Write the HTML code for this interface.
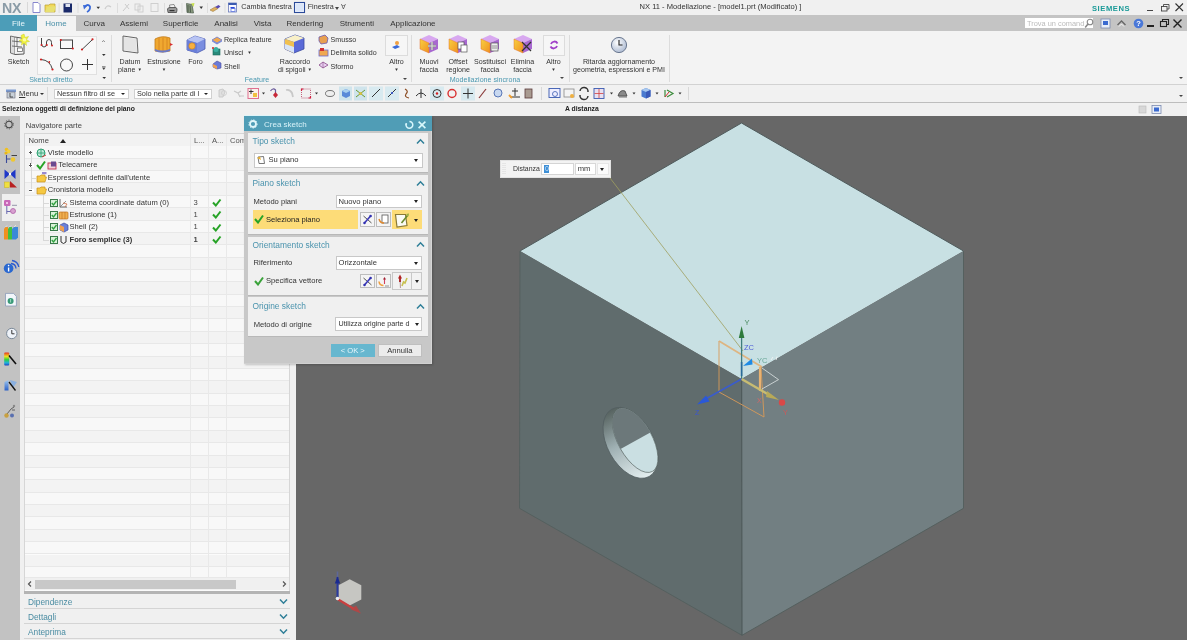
<!DOCTYPE html>
<html><head><meta charset="utf-8">
<style>
*{margin:0;padding:0;box-sizing:border-box}
html,body{width:1187px;height:640px;overflow:hidden;background:#f0f0f0;font-family:"Liberation Sans",sans-serif;color:#333}
.a{position:absolute;white-space:nowrap}
.t{font-size:7.6px;line-height:10px}
.teal{color:#3a8ea8}
.sep{position:absolute;width:1px;background:#d4d4d4}
.dd{position:absolute;background:#fff;border:1px solid #c8c8c8}
svg path:not([fill]),svg polyline:not([fill]){fill:none}
.arr{position:absolute;width:0;height:0;border-left:2.5px solid transparent;border-right:2.5px solid transparent;border-top:3px solid #222}
#wrap{position:absolute;left:0;top:0;width:1187px;height:640px;will-change:transform}
</style></head><body><div id="wrap">

<!-- TITLE BAR -->
<div class="a" style="left:0;top:0;width:1187px;height:15px;background:#f0f0f0"></div>
<div class="a" style="left:2px;top:-0.5px;font-size:14.2px;line-height:16px;font-weight:bold;color:#8a9ba6;letter-spacing:-0.2px">NX</div>
<div class="sep" style="left:26.5px;top:2px;height:11px;background:#d8d8d8"></div>
<svg class="a" style="left:29px;top:1px" width="120" height="13" viewBox="0 0 120 13">
 <path d="M4 1.5 L9 1.5 L11 3.5 L11 11.5 L4 11.5 Z" fill="#fff" stroke="#7a7ac8" stroke-width="0.9"/>
 <path d="M16 4 L20 4 L21 3 L26 3 L26 11 L16 11 Z" fill="#f2d85a" stroke="#b8a030" stroke-width="0.7"/>
 <path d="M18 6 L27 5 L25 11 L16 11 Z" fill="#e8e070"/>
 <rect x="34.5" y="2.5" width="8.5" height="9" fill="#1a2a6a"/><rect x="36.5" y="3" width="4.5" height="3" fill="#dfe4f0"/>
 <path d="M30.1 2 L30.1 12" stroke="#dcdcdc" stroke-width="1"/>
 <path d="M49 2 L49 12" stroke="#dcdcdc" stroke-width="1"/>
 <path d="M56 5.5 Q59 2.5 61 5.5 Q61.5 9 58 11" fill="none" stroke="#3a6ad8" stroke-width="1.8"/><polygon points="54,4 58.5,4.5 55,8.5" fill="#3a6ad8"/>
 <polygon points="67.5,5.8 71,5.8 69.2,8" fill="#333"/>
 <path d="M76 8 Q78 3 82 6" fill="none" stroke="#ccc" stroke-width="1.3"/>
 <path d="M88.5 2 L88.5 12" stroke="#ddd" stroke-width="1"/>
 <path d="M94 10 L100 3 M96 3 L100 8" stroke="#ccc" stroke-width="1"/>
 <rect x="106" y="3" width="5" height="6" fill="none" stroke="#ccc" stroke-width="0.9"/><rect x="109" y="5" width="5" height="6" fill="none" stroke="#ccc" stroke-width="0.9"/>
</svg>
<svg class="a" style="left:149px;top:1px" width="200" height="13" viewBox="0 0 200 13">
 <rect x="2" y="2.5" width="7" height="8" fill="none" stroke="#ccc" stroke-width="0.9"/>
 <path d="M15.5 2 L15.5 12" stroke="#ddd"/>
 <path d="M20.5 4 L25 3.5 L26.5 7 L21 7.5 Z" fill="#f4f4f4" stroke="#666" stroke-width="0.7"/><path d="M18.5 8 Q19 6.5 21 6.5 L26.5 6.5 Q28.5 7 28 9 L27.5 11.5 L19 11.5 Z" fill="#9a9a9a" stroke="#444" stroke-width="0.8"/><rect x="20.5" y="9" width="5" height="1.2" fill="#333"/>
 <path d="M33 2 L33 12" stroke="#ddd"/>
 <path d="M37.5 2.5 L43 3.5 L44.5 12 L38 11.5 Z" fill="#8a9a80" stroke="#4a5a4a" stroke-width="0.7"/><path d="M39 4 L39 11 M41 4.5 L41.5 11.5" stroke="#3a4a3a" stroke-width="0.8"/><path d="M42 2.5 L45.5 2 L44.5 6 Z" fill="#c8e050"/>
 <polygon points="50.5,5.5 54,5.5 52.2,8" fill="#333"/>
 <path d="M58.5 2 L58.5 12" stroke="#ddd"/>
 <path d="M61 9 L66 6 L69 7.5 L64 10.5 Z" fill="#e0b060" stroke="#a08040" stroke-width="0.6"/><path d="M66 6 L69.5 4 L71.5 5.5 L69 7.5 Z" fill="#5a4ab0"/>
 <path d="M76 2 L76 12" stroke="#ddd"/>
 <rect x="79.5" y="2" width="8" height="9" fill="#f8f8ff" stroke="#6a7ab8" stroke-width="0.8"/><rect x="79.5" y="2" width="8" height="2" fill="#3a5ab0"/><path d="M81 6 L86 6 L84 9 Z" fill="#2a4ad8"/><rect x="82" y="7.5" width="4" height="3" fill="#fff" stroke="#2a4ad8" stroke-width="0.6"/>
</svg>
<div class="a t" style="left:241.3px;top:2px;color:#333;font-size:7.2px">Cambia finestra</div>
<svg class="a" style="left:293px;top:1px" width="13" height="13" viewBox="0 0 13 13"><rect x="1.5" y="1.5" width="10" height="10" fill="#f4f8ff" stroke="#2a4a9a" stroke-width="1.1"/><rect x="2.5" y="2.5" width="8" height="8" fill="#dbe6f8"/></svg>
<div class="a t" style="left:307.7px;top:2px;color:#333;font-size:7.2px">Finestra</div>
<div class="arr" style="left:334.5px;top:6.5px;border-top-color:#444"></div>
<div class="a" style="left:341px;top:2px;font-size:7px;line-height:10px;color:#555">&#8704;</div>
<div class="a t" style="left:639.6px;top:2px;color:#333;font-size:7.55px">NX 11 - Modellazione - [model1.prt (Modificato) ]</div>
<div class="a" style="left:1092px;top:3.8px;font-size:7.6px;line-height:10px;font-weight:bold;color:#1a9a98;letter-spacing:0.55px">SIEMENS</div>
<div class="a" style="left:1146.5px;top:10px;width:6px;height:1.2px;background:#444"></div>
<svg class="a" style="left:1159.5px;top:2.5px" width="11" height="10" viewBox="0 0 11 10"><rect x="1.5" y="3.5" width="5.5" height="4.5" fill="none" stroke="#444" stroke-width="0.9"/><path d="M3.5 3.5 L3.5 1.5 L9 1.5 L9 6 L7 6" fill="none" stroke="#444" stroke-width="0.9"/></svg>
<svg class="a" style="left:1173.5px;top:2px" width="11" height="11" viewBox="0 0 11 11"><path d="M1.5 1.5 L9 9 M9 1.5 L1.5 9" stroke="#333" stroke-width="1.1"/></svg>

<!-- TAB BAR -->
<div class="a" style="left:0;top:15px;width:1187px;height:16.6px;background:#c4c4c4"></div>
<div class="a" style="left:0;top:15px;width:37px;height:16.6px;background:#4c9db8"></div>
<div class="a" style="left:37px;top:15.8px;width:38.5px;height:17px;background:#f3f3f3"></div>
<div class="a t" style="left:0;top:18.5px;width:37px;text-align:center;color:#e8f6fa;font-size:8px">File</div>
<div class="a t" style="left:37px;top:18.5px;width:38px;text-align:center;color:#4a90a8;font-size:8px">Home</div>
<div class="a t" style="left:83.6px;top:18.5px;color:#333;font-size:8px">Curva</div>
<div class="a t" style="left:120px;top:18.5px;color:#333;font-size:8px">Assiemi</div>
<div class="a t" style="left:162.8px;top:18.5px;color:#333;font-size:8px">Superficie</div>
<div class="a t" style="left:214.3px;top:18.5px;color:#333;font-size:8px">Analisi</div>
<div class="a t" style="left:253.7px;top:18.5px;color:#333;font-size:8px">Vista</div>
<div class="a t" style="left:286.4px;top:18.5px;color:#333;font-size:8px">Rendering</div>
<div class="a t" style="left:339.7px;top:18.5px;color:#333;font-size:8px">Strumenti</div>
<div class="a t" style="left:390.2px;top:18.5px;color:#333;font-size:8px">Applicazione</div>
<div class="a" style="left:1025.3px;top:18.3px;width:68px;height:10px;background:#fff"></div>
<div class="a t" style="left:1027px;top:18.5px;color:#bbb;font-size:7.4px">Trova un comand</div>
<svg class="a" style="left:1084px;top:18px" width="10" height="11" viewBox="0 0 10 11"><circle cx="6" cy="4" r="2.8" fill="none" stroke="#888" stroke-width="1.1"/><path d="M4 6 L1.2 9.5" stroke="#888" stroke-width="1.5"/></svg>
<svg class="a" style="left:1100px;top:18px" width="11" height="11" viewBox="0 0 11 11"><rect x="1" y="1" width="9" height="9" fill="#e8eef8" stroke="#7a8ab0" stroke-width="0.8"/><rect x="3" y="3" width="5" height="4" fill="#3a6ad0"/></svg>
<svg class="a" style="left:1116px;top:18px" width="11" height="10" viewBox="0 0 11 10"><path d="M1.5 7 L5.5 3 L9.5 7" fill="none" stroke="#666" stroke-width="1.4"/><path d="M3 8.5 L5.5 6 L8 8.5" fill="none" stroke="#fff" stroke-width="0.8"/></svg>
<svg class="a" style="left:1132.5px;top:17.5px" width="11" height="11" viewBox="0 0 11 11"><circle cx="5.5" cy="5.5" r="4.8" fill="#4a78d8"/><text x="5.5" y="8.3" font-size="7.5" font-weight="bold" fill="#fff" text-anchor="middle" font-family="Liberation Sans">?</text></svg>
<div class="a" style="left:1146.5px;top:25px;width:7px;height:1.5px;background:#222"></div>
<svg class="a" style="left:1159px;top:17.5px" width="11" height="10" viewBox="0 0 11 10"><rect x="1.5" y="3.5" width="6" height="5" fill="none" stroke="#222" stroke-width="1.1"/><path d="M3.5 3.5 L3.5 1.5 L9.5 1.5 L9.5 6.5 L7.5 6.5" fill="none" stroke="#222" stroke-width="1.1"/></svg>
<svg class="a" style="left:1172px;top:17.5px" width="11" height="11" viewBox="0 0 11 11"><path d="M1.5 1.5 L9.5 9.5 M9.5 1.5 L1.5 9.5" stroke="#222" stroke-width="1.4"/></svg>

<!-- RIBBON -->
<div class="a" style="left:0;top:31px;width:1187px;height:53px;background:#f3f3f3"></div>
<div class="a" style="left:0;top:84px;width:1187px;height:1px;background:#d2d2d2"></div>
<style>.r{font-size:7.1px;line-height:8px;color:#333;text-align:center}</style>
<!-- Sketch -->
<svg class="a" style="left:8px;top:33px" width="22" height="22" viewBox="0 0 22 22"><path d="M2.5 3 L7 4 L7 21.5 L2.5 20 Z" fill="#ddd" stroke="#555" stroke-width="0.8"/><path d="M7 4 L16 5.5 L16 21 L7 21.5" fill="#f4f4f4" stroke="#555" stroke-width="1"/><path d="M4 8 L14 9 M4 13 L14 14 M9 5 L9 13" stroke="#555" stroke-width="0.8"/><rect x="9.5" y="15" width="5" height="3.5" fill="#fff" stroke="#555" stroke-width="0.7"/>
<path d="M16 1 L17 4.5 L20.5 3.5 L18.5 6.5 L21.5 8.5 L18 9 L18.5 12.5 L16 10 L13.5 12 L14 8.5 L11 7.5 L14 6 L13 2.5 Z" fill="#f0f040" stroke="#c8d020" stroke-width="0.5"/><circle cx="16.5" cy="6.8" r="1.8" fill="#fbfba0"/></svg>
<div class="a r" style="left:0;top:58.1px;width:37px">Sketch</div>
<div class="a" style="left:36.8px;top:35.8px;width:60.7px;height:39.5px;background:#f8f8f8;border:1px solid #e0e0e0"></div>
<svg class="a" style="left:38px;top:36px" width="60" height="38" viewBox="0 0 60 38">
 <path d="M3.5 2.0 L3.5 8.0 Q3.8 11.0 6.0 11.0 Q8.5 11.0 8.5 8.0 L8.5 6.0 Q8.8 3.5 11.0 3.5 Q13.5 3.5 13.5 6.5 L13.5 9.0" stroke="#444" stroke-width="1"/>
 <circle cx="3.5" cy="9" r="1" fill="#d02020"/><circle cx="8.799999999999997" cy="9" r="1" fill="#d02020"/><circle cx="14" cy="9.5" r="1" fill="#d02020"/>
 <rect x="22.5" y="4" width="12" height="8.5" stroke="#444" stroke-width="1" fill="none"/><circle cx="22.799999999999997" cy="4" r="1.1" fill="#d02020"/><circle cx="34.8" cy="12.5" r="1.1" fill="#d02020"/>
 <path d="M44.0 13.5 L54.5 3.5" stroke="#444" stroke-width="1"/><circle cx="44" cy="13.5" r="1.1" fill="#d02020"/><circle cx="54.5" cy="3.299999999999997" r="1.1" fill="#d02020"/>
 <path d="M3.0 23.5 Q12.0 24.0 14.5 33.5" stroke="#444" stroke-width="1"/><circle cx="3" cy="23.5" r="1.1" fill="#d02020"/><circle cx="11.299999999999997" cy="26" r="0.9" fill="#d02020"/><circle cx="14.5" cy="33.5" r="1.1" fill="#d02020"/>
 <circle cx="28.5" cy="29" r="6" stroke="#444" stroke-width="1" fill="none"/>
 <path d="M49.5 23.0 L49.5 34.0 M44.0 28.5 L55.0 28.5" stroke="#333" stroke-width="1"/>
</svg>
<svg class="a" style="left:100px;top:37px" width="8" height="46" viewBox="0 0 8 46"><path d="M2.3 4.8 L3.5 3.6 L4.7 4.8" stroke="#555" stroke-width="0.8"/><polygon points="2,17 5.6,17 3.8,19" fill="#333"/><path d="M2 29.5 L5.6 29.5" stroke="#555" stroke-width="0.6"/><polygon points="2,30.5 5.6,30.5 3.8,33" fill="#444"/><polygon points="2.4,40 6,40 4.2,42" fill="#333"/></svg>
<div class="a r" style="left:25px;top:76.2px;width:52px;color:#4a98b0">Sketch diretto</div>
<div class="sep" style="left:111px;top:35px;height:47px;background:#dcdcdc"></div>
<!-- Datum plane / Estrusione / Foro -->
<svg class="a" style="left:120px;top:34px" width="21" height="21" viewBox="0 0 21 21"><path d="M3 2 L17 4 L18 19 L3 17 Z" fill="#f2f2f2" stroke="#666" stroke-width="1"/><path d="M4 3 L16 5 L17 18 L4 16 Z" fill="#e4e4e4"/></svg>
<div class="a r" style="left:113px;top:58.1px;width:34px">Datum<br>plane <span style="font-size:4.5px;vertical-align:1px">▼</span></div>
<svg class="a" style="left:152px;top:34px" width="24" height="21" viewBox="0 0 24 21"><path d="M3 5 Q10 1 18 4 L18 17 Q10 19 3 17 Z" fill="#f0a830" stroke="#c07818" stroke-width="0.8"/><path d="M7 4 L7 18 M11 3.5 L11 18.5 M15 4 L15 18" stroke="#d88820" stroke-width="1"/><path d="M3 17 Q10 20 18 17 L18 15 Q10 18 3 15 Z" fill="#6a7ac8"/><polygon points="18,9 21,10.5 18,12" fill="#d83030"/></svg>
<div class="a r" style="left:146px;top:58.1px;width:36px">Estrusione<br><span style="font-size:4.5px;vertical-align:1px">▼</span></div>
<svg class="a" style="left:185px;top:34px" width="22" height="21" viewBox="0 0 22 21"><path d="M2 6 L10 2 L20 5 L20 15 L12 19 L2 16 Z" fill="#7a8ee0" stroke="#4a5ab0" stroke-width="0.8"/><path d="M2 6 L12 9 L20 5 L10 2 Z" fill="#b8c4f4"/><path d="M2 6 L12 9 L12 19 L2 16 Z" fill="#6a7ed8"/><circle cx="7" cy="12" r="3.2" fill="#f8b040" stroke="#c88020" stroke-width="0.6"/></svg>
<div class="a r" style="left:183px;top:58.1px;width:25px">Foro</div>
<!-- Replica feature group -->
<svg class="a" style="left:211px;top:34px" width="12" height="36" viewBox="0 0 12 36">
 <path d="M1 6 L6 3 L11 6 L6 9 Z" fill="#f0a850" stroke="#6a7ad0" stroke-width="0.8"/><path d="M1 6 L6 9 L11 6 L11 7.5 L6 10.5 L1 7.5 Z" fill="#7a8ad8"/>
 <rect x="2" y="15" width="7" height="6" fill="#2a8a7a" stroke="#1a6a5a" stroke-width="0.6"/><circle cx="5" cy="15.5" r="2.5" fill="#3ab0a0"/><circle cx="2" cy="14" r="1" fill="#d02020"/>
 <path d="M2 30 L6 27 L10 29 L10 34 L6 35 L2 33 Z" fill="#6a7ad8" stroke="#4a4a9a" stroke-width="0.6"/><path d="M2 30 L6 32 L6 35 L2 33 Z" fill="#f0a050"/>
</svg>
<div class="a r" style="left:224px;top:35.7px;text-align:left">Replica feature</div>
<div class="a r" style="left:224px;top:49.1px;text-align:left">Unisci &nbsp;<span style="font-size:4.5px;vertical-align:1px">▼</span></div>
<div class="a r" style="left:224px;top:63.2px;text-align:left">Shell</div>
<!-- Raccordo -->
<svg class="a" style="left:283px;top:33px" width="23" height="22" viewBox="0 0 23 22"><path d="M2 6 L12 2 L21 5 L21 16 L11 20 L2 16 Z" fill="#5a6ad8" stroke="#3a4aa0" stroke-width="0.8"/><path d="M2 6 L11 9 L21 5 L12 2 Z" fill="#f8f0c8"/><path d="M2 6 L11 9 L11 20 L2 16 Z" fill="#f0c050"/><path d="M2 11 L11 14 L11 20 L2 16 Z" fill="#d8e4f8"/></svg>
<div class="a r" style="left:276px;top:58.1px;width:38px">Raccordo<br>di spigoli <span style="font-size:4.5px;vertical-align:1px">▼</span></div>
<!-- Smusso group -->
<svg class="a" style="left:317px;top:33px" width="13" height="38" viewBox="0 0 13 38">
 <path d="M2 4 L8 2 L11 5 L10 10 L4 11 L2 8 Z" fill="#e8a050" stroke="#6a5ab0" stroke-width="0.8"/>
 <rect x="2" y="17" width="9" height="6" fill="#f0a850" stroke="#6a6ad0" stroke-width="0.8"/><rect x="3" y="15" width="4" height="3" fill="#d03030"/>
 <path d="M2 32 L6 29 L11 32 L6 35 Z" fill="#e8d0f0" stroke="#8a4a8a" stroke-width="0.8"/><path d="M6 29 L6 35" stroke="#8a4a8a" stroke-width="0.6"/>
</svg>
<div class="a r" style="left:330.6px;top:35.7px;text-align:left">Smusso</div>
<div class="a r" style="left:330.6px;top:49.1px;text-align:left">Delimita solido</div>
<div class="a r" style="left:330.6px;top:63.2px;text-align:left">Sformo</div>
<div class="a" style="left:385px;top:34.5px;width:23px;height:21px;background:#f6f6f6;border:1px solid #dcdcdc"></div>
<svg class="a" style="left:390px;top:39px" width="12" height="12" viewBox="0 0 12 12"><circle cx="7" cy="4" r="2" fill="#f0a040"/><path d="M2 8 L7 6 L10 8 L5 10 Z" fill="#3a6ad8"/></svg>
<div class="a r" style="left:383px;top:58.1px;width:27px">Altro<br><span style="font-size:4.5px;vertical-align:1px">▼</span></div>
<div class="a r" style="left:237px;top:76.2px;width:40px;color:#4a98b0">Feature</div>
<polygon></polygon>
<div class="arr" style="left:402.5px;top:77.5px;border-top-color:#444;border-left-width:2px;border-right-width:2px;border-top-width:2.5px"></div>
<div class="sep" style="left:411px;top:35px;height:47px;background:#dcdcdc"></div>
<!-- Modellazione sincrona -->
<svg class="a" style="left:418px;top:33px" width="120" height="22" viewBox="0 0 120 22">
 <defs><linearGradient id="pc" x1="0" y1="0" x2="0" y2="1"><stop offset="0" stop-color="#d8a0f0"/><stop offset="1" stop-color="#9a50c8"/></linearGradient></defs>
 <linearGradient id="lf" x1="0" y1="0" x2="1" y2="1"><stop offset="0" stop-color="#f8d040"/><stop offset="1" stop-color="#f09020"/></linearGradient><g id="cubeA"><path d="M2 6 L11 2 L20 6 L11 10 Z" fill="#d8a8f0"/><path d="M11 10 L20 6 L20 16 L11 20 Z" fill="#a868d0"/><path d="M2 6 L11 10 L11 20 L2 16 Z" fill="url(#lf)" stroke="#e07030" stroke-width="0.5"/></g>
 <path d="M10 13 L18 13 M14 9 L14 17" stroke="#888" stroke-width="2.6"/><path d="M10 13 L18 13 M14 9 L14 17" stroke="#ddd" stroke-width="1.2"/>
 <use href="#cubeA" x="29"/><rect x="40" y="9" width="6" height="7" fill="#fff" stroke="#555" stroke-width="0.7"/><rect x="43" y="12" width="6" height="7" fill="#fff" stroke="#555" stroke-width="0.7"/>
 <use href="#cubeA" x="61"/><rect x="73" y="10" width="7" height="8" fill="#eee" stroke="#555" stroke-width="0.7"/><path d="M74 13 L79 13 M74 15 L79 15" stroke="#555" stroke-width="0.6"/>
 <use href="#cubeA" x="94"/><path d="M104 9 L113 18 M113 9 L104 18" stroke="#333" stroke-width="1.3"/>
</svg>
<div class="a r" style="left:414px;top:58.1px;width:30px">Muovi<br>faccia</div>
<div class="a r" style="left:442px;top:58.1px;width:32px">Offset<br>regione</div>
<div class="a r" style="left:472px;top:58.1px;width:36px">Sostituisci<br>faccia</div>
<div class="a r" style="left:506px;top:58.1px;width:33px">Elimina<br>faccia</div>
<div class="a" style="left:542.6px;top:35px;width:22.4px;height:20.5px;background:#f6f6f6;border:1px solid #dcdcdc"></div>
<svg class="a" style="left:548px;top:39px" width="12" height="12" viewBox="0 0 12 12"><path d="M3 5 A3.5 3.5 0 0 1 9.5 4.5" fill="none" stroke="#a040c8" stroke-width="1.8"/><path d="M9 7 A3.5 3.5 0 0 1 2.5 7.5" fill="none" stroke="#a040c8" stroke-width="1.8"/></svg>
<div class="a r" style="left:540px;top:58.1px;width:27px">Altro<br><span style="font-size:4.5px;vertical-align:1px">▼</span></div>
<div class="a r" style="left:445px;top:76.2px;width:80px;color:#4a98b0">Modellazione sincrona</div>
<div class="arr" style="left:560px;top:77px;border-top-color:#444;border-left-width:2px;border-right-width:2px;border-top-width:2.5px"></div>
<div class="sep" style="left:568.5px;top:35px;height:47px;background:#dcdcdc"></div>
<!-- Ritarda -->
<svg class="a" style="left:610px;top:35.5px" width="18" height="18" viewBox="0 0 18 18"><defs><radialGradient id="clk" cx="0.4" cy="0.35" r="0.7"><stop offset="0" stop-color="#ffffff"/><stop offset="1" stop-color="#aab8d0"/></radialGradient></defs><circle cx="9" cy="9" r="7.6" fill="url(#clk)" stroke="#6a7890" stroke-width="1"/><path d="M9 4 L9 9 L12.5 9" fill="none" stroke="#222" stroke-width="1.1"/></svg>
<div class="a r" style="left:569px;top:58.1px;width:100px">Ritarda aggiornamento<br>geometria, espressioni e PMI</div>
<div class="sep" style="left:669px;top:35px;height:47px;background:#dcdcdc"></div>
<div class="arr" style="left:1179px;top:77px;border-top-color:#444;border-left-width:2px;border-right-width:2px;border-top-width:2.5px"></div>

<!-- TOOLBAR -->
<div class="a" style="left:0;top:85px;width:1187px;height:17px;background:#f1f1f1"></div>
<div class="a" style="left:0;top:102px;width:1187px;height:1px;background:#bdbdbd"></div>
<svg class="a" style="left:5px;top:88px" width="12" height="11" viewBox="0 0 12 11"><rect x="1" y="1.5" width="10" height="2.5" fill="#7a9ad0"/><rect x="2" y="4" width="8" height="6" fill="#c8d0d8" stroke="#667" stroke-width="0.6"/><path d="M5 5 L5 9 L8 9" fill="none" stroke="#333" stroke-width="0.8"/></svg>
<div class="a" style="left:19px;top:88.5px;font-size:7.6px;line-height:10px;color:#333;text-decoration:underline;text-decoration-thickness:0.6px">M</div><div class="a" style="left:25.5px;top:88.5px;font-size:7.6px;line-height:10px;color:#333">enu</div>
<div class="arr" style="left:40px;top:92.5px;border-top-color:#333;border-left-width:2px;border-right-width:2px;border-top-width:2.5px"></div>
<div class="sep" style="left:46.5px;top:87px;height:14px;background:#dadada"></div>
<div class="dd" style="left:54px;top:89px;width:75px;height:9.5px;border-color:#d0d0d0"></div>
<div class="a" style="left:57px;top:89.2px;font-size:7.3px;line-height:10px;color:#333">Nessun filtro di se</div>
<div class="arr" style="left:120.5px;top:92.5px;border-left-width:2.2px;border-right-width:2.2px;border-top-width:2.8px"></div>
<div class="dd" style="left:134px;top:89px;width:78px;height:9.5px;border-color:#d0d0d0"></div>
<div class="a" style="left:137px;top:89.2px;font-size:7.3px;line-height:10px;color:#333">Solo nella parte di l</div>
<div class="arr" style="left:204px;top:92.5px;border-left-width:2.2px;border-right-width:2.2px;border-top-width:2.8px"></div>
<svg class="a" style="left:214px;top:86px" width="480" height="15" viewBox="0 0 480 15">
 <!-- greyed icons -->
 <path d="M5 4 L9 3 L11 6 L9 11 L5 11 Z" fill="#e0e0e0" stroke="#c4c4c4" stroke-width="0.8"/><circle cx="10" cy="7" r="2.5" fill="none" stroke="#ccc" stroke-width="0.8"/>
 <path d="M20 5 L24 7 L27 5 M24 7 L26 11 M25 10 L30 10" stroke="#c8c8c8" stroke-width="1.1"/>
 <rect x="34" y="2.5" width="10.5" height="10" fill="#fbf0ec" stroke="#e07090" stroke-width="1"/><path d="M37 3.5 L37 8 M35 5.5 L39.5 5.5" stroke="#222" stroke-width="0.9"/><rect x="39" y="7" width="4" height="4" fill="#f0c040"/>
 <polygon points="48,6.5 51,6.5 49.5,8.5" fill="#333"/>
 <path d="M56.5 5 Q59 1.5 61.5 4 L61.5 8" fill="none" stroke="#6a5a9a" stroke-width="1.2"/><polygon points="61.5,6 64,9 61.5,12 59,9" fill="#c82838"/>
 <path d="M72 4 Q76 3 78 7 L79 11" fill="none" stroke="#c8c8c8" stroke-width="1.8"/>
 <rect x="87.5" y="3" width="9" height="9" fill="none" stroke="#b84060" stroke-width="0.8" stroke-dasharray="1 1"/><path d="M87.5 5 L87.5 3 L89.5 3 M94.5 12 L96.5 12 L96.5 10" stroke="#d02040" stroke-width="1.2"/>
 <polygon points="101,6.5 104,6.5 102.5,8.5" fill="#333"/>
 <ellipse cx="116" cy="7.5" rx="4.5" ry="3" fill="#eee" stroke="#555" stroke-width="0.8"/>
 <rect x="125" y="0.5" width="13" height="14" fill="#cfe4ec"/><path d="M128 5 L132 3 L136 5 L136 10 L132 12 L128 10 Z" fill="#5a8ad8"/><path d="M128 5 L132 7 L136 5 L132 3 Z" fill="#a8d0f0"/>
 <rect x="140" y="0.5" width="13" height="14" fill="#cfe4ec"/><path d="M142 4 L151 11 M151 4 L142 11" stroke="#6a9a30" stroke-width="1"/><circle cx="146.5" cy="7.5" r="1.6" fill="#d8c040"/>
 <rect x="155" y="0.5" width="14" height="14" fill="#d8eaf0"/><path d="M158 11 L166 3" stroke="#333" stroke-width="1"/>
 <rect x="171" y="0.5" width="14" height="14" fill="#d8eaf0"/><path d="M174 11 L182 3" stroke="#333" stroke-width="1"/><circle cx="178" cy="7" r="1" fill="#2a4ad0"/>
 <path d="M191 3 Q195 5 192 8 Q190 11 195 12" fill="none" stroke="#8a4a20" stroke-width="1.2"/>
 <path d="M202 10 Q207 4 212 10 M207 3 L207 12" fill="none" stroke="#333" stroke-width="1"/>
 <rect x="216" y="0.5" width="14" height="14" fill="#d8eaf0"/><circle cx="223" cy="7.5" r="4" fill="none" stroke="#333" stroke-width="1"/><circle cx="223" cy="7.5" r="1.2" fill="#d02020"/>
 <circle cx="238" cy="7.5" r="4" fill="none" stroke="#d83030" stroke-width="1.4"/>
 <rect x="247" y="0.5" width="14" height="14" fill="#d8eaf0"/><path d="M254 2.5 L254 12.5 M249 7.5 L259 7.5" stroke="#333" stroke-width="1"/>
 <path d="M265 12 L272 3" stroke="#8a3a3a" stroke-width="1.2"/>
 <circle cx="284" cy="7" r="4" fill="#c8d8f0" stroke="#4a6ab0" stroke-width="0.9"/>
 <path d="M296 11 L306 11 M301 2 L301 10 M298 5 L304 5" stroke="#333" stroke-width="1"/><path d="M295 9 L298 12" stroke="#f0a030" stroke-width="2"/>
 <rect x="311" y="3" width="7" height="9" fill="#a89a90" stroke="#5a3a3a" stroke-width="0.8"/>
 <path d="M327.5 1 L327.5 14" stroke="#d8d8d8"/>
 <rect x="335" y="2.5" width="11" height="9" fill="#eef" stroke="#3a5ab0" stroke-width="0.9"/><circle cx="341" cy="8" r="2.5" fill="none" stroke="#3a5ab0" stroke-width="0.8"/>
 <rect x="350" y="3" width="10" height="8" fill="#f4f4f4" stroke="#888" stroke-width="0.8"/><circle cx="358" cy="10" r="2" fill="#f0b040"/>
 <path d="M366 5 A4 4 0 0 1 374 6 M374 10 A4 4 0 0 1 366 9" fill="none" stroke="#333" stroke-width="1.5"/>
 <rect x="380" y="2.5" width="10" height="10" fill="#e8e0f0" stroke="#3a5ab0" stroke-width="0.9"/><path d="M385 3 L385 12 M380.5 7.5 L389.5 7.5" stroke="#d04040" stroke-width="0.8"/>
 <polygon points="396,6.5 399,6.5 397.5,8.5" fill="#333"/>
 <path d="M404 10 Q406 3 411 5 L413 10 Z" fill="#8a8a8a" stroke="#444" stroke-width="0.8"/><path d="M405 11 L413 11" stroke="#555" stroke-width="0.8"/>
 <polygon points="418.5,6.5 421.5,6.5 420,8.5" fill="#333"/>
 <path d="M427.5 4 L432 2 L436.5 4 L436.5 10.5 L432 12.5 L427.5 10.5 Z" fill="#4a7ad0"/><path d="M427.5 4 L432 6 L436.5 4 L432 2 Z" fill="#a8c8f0"/><path d="M432 6 L432 12.5 L436.5 10.5 L436.5 4 Z" fill="#3a5ab8"/>
 <polygon points="441.5,6.5 444.5,6.5 443,8.5" fill="#333"/>
 <path d="M451 4 L451 11 M453 4 L459 7.5 L453 11" fill="none" stroke="#3a8a3a" stroke-width="1.2"/><path d="M451 11 L455 6" stroke="#d03030" stroke-width="1"/>
 <polygon points="464.5,6.5 467.5,6.5 466,8.5" fill="#333"/>
 <path d="M474.5 1 L474.5 14" stroke="#d8d8d8"/>
</svg>
<div class="arr" style="left:1179px;top:95px;border-top-color:#444;border-left-width:2px;border-right-width:2px;border-top-width:2.5px"></div>

<!-- STATUS -->
<div class="a" style="left:0;top:103px;width:1187px;height:13px;background:#f0f0f0"></div>
<div class="a" style="left:2px;top:104px;font-size:6.8px;line-height:10px;font-weight:bold;color:#222">Seleziona oggetti di definizione del piano</div>
<div class="a" style="left:565px;top:104px;font-size:6.8px;line-height:10px;font-weight:bold;color:#222">A distanza</div>
<svg class="a" style="left:1137px;top:104px" width="28" height="11" viewBox="0 0 28 11"><rect x="2" y="2" width="7" height="7" fill="#d8d8d8" stroke="#bbb" stroke-width="0.6"/><rect x="15" y="1.5" width="9" height="8" fill="#e8eef8" stroke="#7a8ab0" stroke-width="0.8"/><rect x="17" y="3.5" width="5" height="4" fill="#3a6ad0"/></svg>

<!-- SIDEBAR -->
<div class="a" style="left:0;top:116px;width:20px;height:524px;background:#c2c2c2"></div>
<div class="a" style="left:2.2px;top:193.8px;width:17.6px;height:27.5px;background:#efefef"></div>
<svg class="a" style="left:0;top:116px" width="20" height="310" viewBox="0 0 20 310">
 <defs><linearGradient id="rb" x1="0" y1="0" x2="0" y2="1"><stop offset="0" stop-color="#e83020"/><stop offset="0.3" stop-color="#f0e020"/><stop offset="0.55" stop-color="#30d040"/><stop offset="0.8" stop-color="#20b0e0"/><stop offset="1" stop-color="#2040c0"/></linearGradient>
 <linearGradient id="bk" x1="0" y1="0" x2="0" y2="1"><stop offset="0" stop-color="#a0c8f0"/><stop offset="1" stop-color="#2a60c8"/></linearGradient></defs>
 <!-- gear -->
 <circle cx="9" cy="8.5" r="3.2" fill="none" stroke="#444" stroke-width="1.1"/><circle cx="9" cy="8.5" r="4.4" fill="none" stroke="#555" stroke-width="0.9" stroke-dasharray="1.2 1.6"/>
 <!-- icon1 -->
 <circle cx="6.5" cy="33.5" r="1.8" fill="#f0c020"/><circle cx="8.5" cy="35.5" r="2" fill="#f4d040"/><circle cx="6" cy="37" r="1.6" fill="#e8b818"/>
 <path d="M6.5 39 L6.5 47 M6.5 43 L10.5 43" stroke="#3a4a9a" stroke-width="1.1"/>
 <circle cx="13" cy="43.5" r="2.3" fill="#f0c830"/>
 <path d="M11.5 39.5 L17 39.5" stroke="#333" stroke-width="0.9"/>
 <!-- icon2 bowtie -->
 <polygon points="4.5,53.5 10,58 4.5,63" fill="#2038c8"/><polygon points="15.5,53.5 10,58 15.5,63" fill="#2038c8"/><circle cx="10" cy="58" r="1.2" fill="#fff"/>
 <rect x="4.5" y="66" width="4.8" height="5.6" fill="#f0e040" stroke="#c8b020" stroke-width="0.5"/>
 <polygon points="10,65 10,71.6 17,71.6" fill="#b82020"/>
 <!-- icon3 selected -->
 <rect x="4" y="84" width="6.5" height="6" rx="1.2" fill="#c868b8"/><rect x="6" y="86" width="2" height="2" fill="#f0c0e8"/>
 <path d="M12 89.3 L17 89.3" stroke="#8a8aa0" stroke-width="0.9"/>
 <path d="M6.8 90 L6.8 98 M6.8 95.5 L10.5 95.5" stroke="#6a6ab0" stroke-width="1"/>
 <circle cx="13" cy="95" r="2.5" fill="#d8a0d0" stroke="#b060a8" stroke-width="0.8"/>
 <!-- icon4 books -->
 <path d="M4 113 L5.5 111 L8 111 L8 123.5 L4 123.5 Z" fill="#f09020"/>
 <path d="M8 113 L9.5 111 L12 111 L12 123.5 L8 123.5 Z" fill="#40c040"/>
 <path d="M12 113 L14 111 L18 111 L18 121.5 L16 123.5 L12 123.5 Z" fill="#3a88d8"/>
 <path d="M5.5 111 L7 109.5 M9.5 111 L11 109.5 M14 111 L16 109" stroke="#e8e8e8" stroke-width="0.8"/>
 <!-- icon5 info -->
 <path d="M11 147.5 A5.5 5.5 0 0 1 16 152.5 M12 144.5 A8 8 0 0 1 18.8 151" stroke="#2a5ad0" stroke-width="1.3"/>
 <circle cx="8.6" cy="152.4" r="4.8" fill="#2a68d0"/><path d="M8.6 151.5 L8.6 155.5" stroke="#fff" stroke-width="1.4"/><circle cx="8.6" cy="149.6" r="0.8" fill="#fff"/>
 <!-- icon6 doc -->
 <path d="M5.5 177.4 L13.5 177.4 L16.4 180.4 L16.4 190 L5.5 190 Z" fill="#f2f6fa" stroke="#8a9ab8" stroke-width="0.8"/><circle cx="10.6" cy="185" r="3" fill="#3a9a78"/><path d="M10.6 183 L10.6 186.5" stroke="#b8e8d0" stroke-width="0.8"/>
 <!-- icon7 clock -->
 <circle cx="11.8" cy="217.5" r="5.2" fill="#eef2f8" stroke="#7a8898" stroke-width="1"/><path d="M11.8 214 L11.8 217.8 L14.5 217.8" stroke="#222" stroke-width="0.9"/>
 <!-- icon8 rainbow -->
 <rect x="4.2" y="236.5" width="5" height="13" rx="1" fill="url(#rb)"/><path d="M9 239.5 L16 248" stroke="#111" stroke-width="1.6"/>
 <!-- icon9 blue k -->
 <path d="M4.5 266 L8.5 264 L8.5 274.5 L4.5 274.5 Z" fill="url(#bk)"/><path d="M10 264 L17 266 L13 272 Z" fill="#8ab0e0"/><path d="M9 266 L15.5 274.5" stroke="#111" stroke-width="1.3"/>
 <!-- icon10 robot -->
 <path d="M7 298 L11 293 L14 291 M12 294 L15 294" stroke="#555" stroke-width="0.9"/><circle cx="6.5" cy="299.5" r="2.2" fill="#c8a040"/><circle cx="12" cy="299.5" r="2" fill="#5a70b0"/><circle cx="14" cy="290" r="1.2" fill="#888"/>
</svg>

<!-- LEFT PANEL -->
<div class="a" style="left:20px;top:116px;width:276px;height:524px;background:#f0f0f0"></div>
<div class="a t" style="left:25.8px;top:120.5px;color:#444">Navigatore parte</div>
<!-- table -->
<div class="a" style="left:24px;top:133px;width:265.5px;height:459px;background:#fbfbfb;border:1px solid #d6d6d6"></div>
<div class="a" style="left:25px;top:134px;width:264px;height:12.5px;background:#f2f2f2;border-bottom:1px solid #e2e2e2"></div>
<div class="a t" style="left:28.6px;top:136px;color:#444">Nome</div>
<div class="a" style="left:59.5px;top:138.5px;width:0;height:0;border-left:3px solid transparent;border-right:3px solid transparent;border-bottom:4px solid #222"></div>
<div class="a t" style="left:194px;top:136px;color:#555">L...</div>
<div class="a t" style="left:212px;top:136px;color:#555">A...</div>
<div class="a t" style="left:230px;top:136px;color:#555">Com</div>
<div class="a" style="left:25px;top:146.30px;width:264px;height:12.37px;background:#f8f8f8;border-bottom:1px solid #e8e8e8"></div>
<div class="a" style="left:25px;top:158.67px;width:264px;height:12.37px;background:#f3f3f3;border-bottom:1px solid #e8e8e8"></div>
<div class="a" style="left:25px;top:171.04px;width:264px;height:12.37px;background:#f8f8f8;border-bottom:1px solid #e8e8e8"></div>
<div class="a" style="left:25px;top:183.41px;width:264px;height:12.37px;background:#f3f3f3;border-bottom:1px solid #e8e8e8"></div>
<div class="a" style="left:25px;top:195.78px;width:264px;height:12.37px;background:#f8f8f8;border-bottom:1px solid #e8e8e8"></div>
<div class="a" style="left:25px;top:208.15px;width:264px;height:12.37px;background:#f3f3f3;border-bottom:1px solid #e8e8e8"></div>
<div class="a" style="left:25px;top:220.52px;width:264px;height:12.37px;background:#f8f8f8;border-bottom:1px solid #e8e8e8"></div>
<div class="a" style="left:25px;top:232.89px;width:264px;height:12.37px;background:#f3f3f3;border-bottom:1px solid #e8e8e8"></div>
<div class="a" style="left:25px;top:245.26px;width:264px;height:12.37px;background:#f8f8f8;border-bottom:1px solid #e8e8e8"></div>
<div class="a" style="left:25px;top:257.63px;width:264px;height:12.37px;background:#f3f3f3;border-bottom:1px solid #e8e8e8"></div>
<div class="a" style="left:25px;top:270.00px;width:264px;height:12.37px;background:#f8f8f8;border-bottom:1px solid #e8e8e8"></div>
<div class="a" style="left:25px;top:282.37px;width:264px;height:12.37px;background:#f3f3f3;border-bottom:1px solid #e8e8e8"></div>
<div class="a" style="left:25px;top:294.74px;width:264px;height:12.37px;background:#f8f8f8;border-bottom:1px solid #e8e8e8"></div>
<div class="a" style="left:25px;top:307.11px;width:264px;height:12.37px;background:#f3f3f3;border-bottom:1px solid #e8e8e8"></div>
<div class="a" style="left:25px;top:319.48px;width:264px;height:12.37px;background:#f8f8f8;border-bottom:1px solid #e8e8e8"></div>
<div class="a" style="left:25px;top:331.85px;width:264px;height:12.37px;background:#f3f3f3;border-bottom:1px solid #e8e8e8"></div>
<div class="a" style="left:25px;top:344.22px;width:264px;height:12.37px;background:#f8f8f8;border-bottom:1px solid #e8e8e8"></div>
<div class="a" style="left:25px;top:356.59px;width:264px;height:12.37px;background:#f3f3f3;border-bottom:1px solid #e8e8e8"></div>
<div class="a" style="left:25px;top:368.96px;width:264px;height:12.37px;background:#f8f8f8;border-bottom:1px solid #e8e8e8"></div>
<div class="a" style="left:25px;top:381.33px;width:264px;height:12.37px;background:#f3f3f3;border-bottom:1px solid #e8e8e8"></div>
<div class="a" style="left:25px;top:393.70px;width:264px;height:12.37px;background:#f8f8f8;border-bottom:1px solid #e8e8e8"></div>
<div class="a" style="left:25px;top:406.07px;width:264px;height:12.37px;background:#f3f3f3;border-bottom:1px solid #e8e8e8"></div>
<div class="a" style="left:25px;top:418.44px;width:264px;height:12.37px;background:#f8f8f8;border-bottom:1px solid #e8e8e8"></div>
<div class="a" style="left:25px;top:430.81px;width:264px;height:12.37px;background:#f3f3f3;border-bottom:1px solid #e8e8e8"></div>
<div class="a" style="left:25px;top:443.18px;width:264px;height:12.37px;background:#f8f8f8;border-bottom:1px solid #e8e8e8"></div>
<div class="a" style="left:25px;top:455.55px;width:264px;height:12.37px;background:#f3f3f3;border-bottom:1px solid #e8e8e8"></div>
<div class="a" style="left:25px;top:467.92px;width:264px;height:12.37px;background:#f8f8f8;border-bottom:1px solid #e8e8e8"></div>
<div class="a" style="left:25px;top:480.29px;width:264px;height:12.37px;background:#f3f3f3;border-bottom:1px solid #e8e8e8"></div>
<div class="a" style="left:25px;top:492.66px;width:264px;height:12.37px;background:#f8f8f8;border-bottom:1px solid #e8e8e8"></div>
<div class="a" style="left:25px;top:505.03px;width:264px;height:12.37px;background:#f3f3f3;border-bottom:1px solid #e8e8e8"></div>
<div class="a" style="left:25px;top:517.40px;width:264px;height:12.37px;background:#f8f8f8;border-bottom:1px solid #e8e8e8"></div>
<div class="a" style="left:25px;top:529.77px;width:264px;height:12.37px;background:#f3f3f3;border-bottom:1px solid #e8e8e8"></div>
<div class="a" style="left:25px;top:542.14px;width:264px;height:12.37px;background:#f8f8f8;border-bottom:1px solid #e8e8e8"></div>
<div class="a" style="left:25px;top:554.51px;width:264px;height:12.37px;background:#f3f3f3;border-bottom:1px solid #e8e8e8"></div>
<div class="a" style="left:25px;top:566.88px;width:264px;height:11.12px;background:#f8f8f8;border-bottom:1px solid #e8e8e8"></div>
<div class="a t" style="left:47.8px;top:147.70px;color:#333;">Viste modello</div>
<div class="a t" style="left:58.2px;top:160.15px;color:#333;">Telecamere</div>
<div class="a t" style="left:47.8px;top:172.60px;color:#333;">Espressioni definite dall'utente</div>
<div class="a t" style="left:47.8px;top:185.05px;color:#333;">Cronistoria modello</div>
<div class="a t" style="left:69.5px;top:197.50px;color:#333;">Sistema coordinate datum (0)</div>
<div class="a t" style="left:69.5px;top:209.95px;color:#333;">Estrusione (1)</div>
<div class="a t" style="left:69.5px;top:222.40px;color:#333;">Shell (2)</div>
<div class="a t" style="left:69.5px;top:234.85px;color:#333;font-weight:bold;">Foro semplice (3)</div>
<div class="a" style="left:30.5px;top:152.7px;width:0;height:37.3px;border-left:1px solid #d8d8d8"></div>
<div class="a" style="left:42.5px;top:194.0px;width:0;height:45.8px;border-left:1px solid #d8d8d8"></div>
<div class="a" style="left:42.5px;top:202.5px;width:6px;height:0;border-top:1px solid #d8d8d8"></div>
<div class="a" style="left:42.5px;top:214.9px;width:6px;height:0;border-top:1px solid #d8d8d8"></div>
<div class="a" style="left:42.5px;top:227.4px;width:6px;height:0;border-top:1px solid #d8d8d8"></div>
<div class="a" style="left:42.5px;top:239.8px;width:6px;height:0;border-top:1px solid #d8d8d8"></div>
<div class="a" style="left:30.5px;top:177.6px;width:5px;height:0;border-top:1px solid #d8d8d8"></div>
<div class="a" style="left:28.5px;top:151.2px;width:5px;height:3px;background:#fff"></div>
<div class="a" style="left:28.8px;top:152.2px;width:3.5px;height:1px;background:#555"></div>
<div class="a" style="left:30.3px;top:150.7px;width:1px;height:3.5px;background:#555"></div>
<div class="a" style="left:28.5px;top:163.6px;width:5px;height:3px;background:#fff"></div>
<div class="a" style="left:28.8px;top:164.6px;width:3.5px;height:1px;background:#555"></div>
<div class="a" style="left:30.3px;top:163.1px;width:1px;height:3.5px;background:#555"></div>
<div class="a" style="left:28.5px;top:188.5px;width:5px;height:3px;background:#fff"></div>
<div class="a" style="left:28.8px;top:189.5px;width:3.5px;height:1px;background:#555"></div>
<svg class="a" style="left:36px;top:147.7px" width="11" height="11" viewBox="0 0 11 11"><circle cx="5" cy="5" r="4" fill="#bfe8d8" stroke="#2aa070" stroke-width="1"/><path d="M5 1 L5 9 M1 5 L9 5" stroke="#2aa070" stroke-width="0.8"/><path d="M6 9 L10 7" stroke="#d04040" stroke-width="1"/></svg>
<svg class="a" style="left:36px;top:160.1px" width="10" height="10" viewBox="0 0 10 10"><path d="M1 5 L4 8.5 L9 1.5" fill="none" stroke="#27a327" stroke-width="2"/></svg>
<svg class="a" style="left:47px;top:160.1px" width="11" height="11" viewBox="0 0 11 11"><rect x="1" y="3" width="8" height="6" fill="#f0d0d8" stroke="#c03050" stroke-width="0.9"/><rect x="4" y="1.5" width="5" height="5" fill="#6a4a90"/></svg>
<svg class="a" style="left:36px;top:172.6px" width="11" height="10" viewBox="0 0 11 10"><path d="M1 3 L4 3 L5 2 L9 2 L9 4 L10.5 4 L9 9 L1 9 Z" fill="#f5c842" stroke="#c89018" stroke-width="0.7"/></svg>
<svg class="a" style="left:36px;top:185.0px" width="11" height="10" viewBox="0 0 11 10"><path d="M1 3 L4 3 L5 2 L9 2 L9 4 L10.5 4 L9 9 L1 9 Z" fill="#f5c842" stroke="#c89018" stroke-width="0.7"/></svg>
<svg class="a" style="left:41.5px;top:171.5px" width="5" height="3" viewBox="0 0 5 3"><rect x="0" y="0" width="4.5" height="2.2" fill="#9a8ad0"/></svg>
<svg class="a" style="left:49.5px;top:198.5px" width="8" height="8" viewBox="0 0 8 8"><rect x="0.5" y="0.5" width="7" height="7" fill="#d8f2d8" stroke="#3a7a4a" stroke-width="1"/><path d="M1.8 4 L3.5 6 L6.5 2" fill="none" stroke="#30a040" stroke-width="1.3"/></svg>
<svg class="a" style="left:49.5px;top:210.9px" width="8" height="8" viewBox="0 0 8 8"><rect x="0.5" y="0.5" width="7" height="7" fill="#d8f2d8" stroke="#3a7a4a" stroke-width="1"/><path d="M1.8 4 L3.5 6 L6.5 2" fill="none" stroke="#30a040" stroke-width="1.3"/></svg>
<svg class="a" style="left:49.5px;top:223.4px" width="8" height="8" viewBox="0 0 8 8"><rect x="0.5" y="0.5" width="7" height="7" fill="#d8f2d8" stroke="#3a7a4a" stroke-width="1"/><path d="M1.8 4 L3.5 6 L6.5 2" fill="none" stroke="#30a040" stroke-width="1.3"/></svg>
<svg class="a" style="left:49.5px;top:235.8px" width="8" height="8" viewBox="0 0 8 8"><rect x="0.5" y="0.5" width="7" height="7" fill="#d8f2d8" stroke="#3a7a4a" stroke-width="1"/><path d="M1.8 4 L3.5 6 L6.5 2" fill="none" stroke="#30a040" stroke-width="1.3"/></svg>
<svg class="a" style="left:58px;top:197.5px" width="11" height="11" viewBox="0 0 11 11"><path d="M2 1 L2 9 L9 9" fill="none" stroke="#555" stroke-width="0.9"/><path d="M2 9 L8 3" stroke="#777" stroke-width="0.8"/><path d="M5 5 L9 6 L7 9" fill="none" stroke="#d06030" stroke-width="0.7"/></svg>
<svg class="a" style="left:58px;top:209.9px" width="11" height="10" viewBox="0 0 11 10"><rect x="1" y="2" width="9" height="7" rx="1" fill="#f0b050" stroke="#c07020" stroke-width="0.7"/><path d="M4 2 L4 9 M7 2 L7 9" stroke="#c07020" stroke-width="0.6"/></svg>
<svg class="a" style="left:58px;top:222.4px" width="11" height="11" viewBox="0 0 11 11"><path d="M2 3 L6 1 L10 3 L10 8 L6 10 L2 8 Z" fill="#6a80d8" stroke="#3a4aa0" stroke-width="0.7"/><path d="M2 3 L6 5 L6 10 L2 8 Z" fill="#f0a050"/></svg>
<svg class="a" style="left:59px;top:234.8px" width="9" height="11" viewBox="0 0 9 11"><path d="M2 1 L2 7 Q4.5 10 7 7 L7 1" fill="none" stroke="#333" stroke-width="1"/></svg>
<div class="a t" style="left:193.5px;top:197.5px;color:#444;">3</div>
<svg class="a" style="left:211.5px;top:198.0px" width="10" height="9" viewBox="0 0 10 9"><path d="M1 4.5 L3.8 7.5 L8.5 1.5" fill="none" stroke="#27a327" stroke-width="2"/></svg>
<div class="a t" style="left:193.5px;top:209.9px;color:#444;">1</div>
<svg class="a" style="left:211.5px;top:210.4px" width="10" height="9" viewBox="0 0 10 9"><path d="M1 4.5 L3.8 7.5 L8.5 1.5" fill="none" stroke="#27a327" stroke-width="2"/></svg>
<div class="a t" style="left:193.5px;top:222.4px;color:#444;">1</div>
<svg class="a" style="left:211.5px;top:222.9px" width="10" height="9" viewBox="0 0 10 9"><path d="M1 4.5 L3.8 7.5 L8.5 1.5" fill="none" stroke="#27a327" stroke-width="2"/></svg>
<div class="a t" style="left:193.5px;top:234.8px;color:#444;font-weight:bold;">1</div>
<svg class="a" style="left:211.5px;top:235.3px" width="10" height="9" viewBox="0 0 10 9"><path d="M1 4.5 L3.8 7.5 L8.5 1.5" fill="none" stroke="#27a327" stroke-width="2"/></svg>
<div class="sep" style="left:190px;top:134px;height:444px;background:#e9e9e9"></div>
<div class="sep" style="left:208px;top:134px;height:444px;background:#e9e9e9"></div>
<div class="sep" style="left:225.5px;top:134px;height:444px;background:#e9e9e9"></div>
<!-- scrollbar -->
<div class="a" style="left:25px;top:578px;width:264px;height:12px;background:#f0f0f0"></div>
<div class="a" style="left:35px;top:580px;width:201px;height:8.5px;background:#c8c8c8"></div>
<svg class="a" style="left:26px;top:580px" width="8" height="8" viewBox="0 0 8 8"><path d="M5 1.5 L2.5 4 L5 6.5" fill="none" stroke="#555" stroke-width="1.2"/></svg>
<svg class="a" style="left:280px;top:580px" width="8" height="8" viewBox="0 0 8 8"><path d="M3 1.5 L5.5 4 L3 6.5" fill="none" stroke="#555" stroke-width="1.2"/></svg>
<div class="a" style="left:24px;top:591.2px;width:265.5px;height:2.8px;background:#b4b4b4"></div>
<!-- accordions -->
<div class="a" style="left:24px;top:594px;width:265.5px;height:46px;background:#f0f0f0"></div>
<div class="a" style="left:24px;top:608px;width:265.5px;height:1px;background:#d4d4d4"></div>
<div class="a" style="left:24px;top:623px;width:265.5px;height:1px;background:#d4d4d4"></div>
<div class="a" style="left:24px;top:638px;width:265.5px;height:1px;background:#d4d4d4"></div>
<div class="a t" style="left:28px;top:597px;color:#4a8ca2;font-size:8.3px">Dipendenze</div>
<div class="a t" style="left:28px;top:611.5px;color:#4a8ca2;font-size:8.3px">Dettagli</div>
<div class="a t" style="left:28px;top:626.5px;color:#4a8ca2;font-size:8.3px">Anteprima</div>
<svg class="a" style="left:278.5px;top:598px" width="9" height="7" viewBox="0 0 9 7"><path d="M1 1.5 L4.5 5.2 L8 1.5" fill="none" stroke="#2f7f98" stroke-width="1.5"/></svg>
<svg class="a" style="left:278.5px;top:613px" width="9" height="7" viewBox="0 0 9 7"><path d="M1 1.5 L4.5 5.2 L8 1.5" fill="none" stroke="#2f7f98" stroke-width="1.5"/></svg>
<svg class="a" style="left:278.5px;top:628px" width="9" height="7" viewBox="0 0 9 7"><path d="M1 1.5 L4.5 5.2 L8 1.5" fill="none" stroke="#2f7f98" stroke-width="1.5"/></svg>

<!-- VIEWPORT -->
<div class="a" style="left:296px;top:116px;width:891px;height:524px;background:#676767"></div>
<svg class="a" style="left:0;top:0" width="1187" height="640" viewBox="0 0 1187 640">
  <!-- cube faces -->
  <polygon points="741.5,123 963.5,251 741.5,379 520,251" fill="#c8e0e3"/>
  <polygon points="520,251 741.5,379 742,635.3 519.5,508.3" fill="#606c6d"/>
  <polygon points="741.5,379 963.5,251 963.5,508.3 742,635.3" fill="#727f82"/>
  <!-- edges -->
  <polyline points="520,251 741.5,123 963.5,251" fill="none" stroke="#4f5b5c" stroke-width="1"/>
  <polyline points="520,251 519.5,508.3 742,635.3 963.5,508.3 963.5,251" fill="none" stroke="#55605f" stroke-width="1"/>
  <line x1="741.7" y1="379" x2="742" y2="635.3" stroke="#4a5656" stroke-width="1"/>
  <!-- hole -->
  <defs>
    <linearGradient id="wall" x1="0" y1="0" x2="1" y2="0">
      <stop offset="0" stop-color="#56625f"/>
      <stop offset="0.45" stop-color="#9fb0b3"/>
      <stop offset="1" stop-color="#e4eff0"/>
    </linearGradient>
    <clipPath id="inner"><ellipse cx="0.14" cy="-5.4" rx="35.5" ry="17"/></clipPath>
  </defs>
  <g transform="translate(630.45,442.85) rotate(61)">
    <ellipse cx="0" cy="0" rx="38.5" ry="23" fill="url(#wall)" stroke="#525e60" stroke-width="0.7"/>
    <ellipse cx="0.14" cy="-5.4" rx="35.5" ry="17" fill="#cadfe2" stroke="#56625f" stroke-width="0.6"/>
    <g clip-path="url(#inner)"><rect x="-50" y="-40" width="50.6" height="80" fill="#6c787a"/></g>
  </g>
  <!-- leader line -->
  <line x1="610" y1="178" x2="743" y2="351" stroke="#a0a060" stroke-width="0.8"/>
  <!-- CSYS -->
  <polyline points="719,341 719,392 764,417 761,367" fill="none" stroke="#d89a58" stroke-width="1" opacity="0.9"/>
  <line x1="719" y1="341" x2="762" y2="367" stroke="#e2ae72" stroke-width="1.8" opacity="0.85"/>
  <line x1="741.6" y1="379" x2="741.6" y2="336" stroke="#3e7c7c" stroke-width="1.3"/>
  <line x1="741.6" y1="362" x2="741.6" y2="376" stroke="#2a6a9a" stroke-width="1.6"/>
  <polygon points="738.8,338 744.4,338 741.6,326" fill="#2e7a3c"/>
  <line x1="741.6" y1="379" x2="702" y2="401" stroke="#3a5ccc" stroke-width="1.6"/>
  <polygon points="697,404.5 706,395.5 709.5,401.5" fill="#2a58d8"/>
  <line x1="760" y1="367" x2="760" y2="391" stroke="#e8b272" stroke-width="2.2"/>
  <line x1="741.6" y1="379" x2="771" y2="396" stroke="#c8bc72" stroke-width="2.4"/>
  <polygon points="767,391 779,400 766,397" fill="#b8aa58"/>
  <circle cx="782" cy="402.5" r="3.2" fill="#d84848"/>
  <polyline points="762,368 778.5,379.6 762,389" fill="none" stroke="#dfe6e6" stroke-width="0.8"/>
  <polygon points="743,366 752,358.5 752.5,364.5" fill="#1e8ae4"/>
  <path d="M771 360 L773 357 M776 360 L777 356.5" stroke="#f0f4f4" stroke-width="0.9"/>
  <text x="744.5" y="324.5" font-size="7.5" fill="#4a8a60" font-family="Liberation Sans">Y</text>
  <text x="744" y="350" font-size="7.5" fill="#5060d8" font-family="Liberation Sans">ZC</text>
  <text x="757" y="363" font-size="7.5" fill="#6aa898" font-family="Liberation Sans">YC</text>
  <text x="695" y="415" font-size="7" fill="#3a55d0" font-family="Liberation Sans">Z</text>
  <text x="757" y="402.5" font-size="7" fill="#d06868" font-family="Liberation Sans">X</text>
  <text x="783" y="414.5" font-size="7" fill="#d05858" font-family="Liberation Sans">Y</text>
  <!-- view triad -->
  <polygon points="349.7,579.2 361.3,585.2 361.3,599.4 349.7,605.4 338.5,599.4 338.5,585.2" fill="#c6c6c2"/>
  <line x1="337.5" y1="598.5" x2="337.5" y2="577" stroke="#2a3aa0" stroke-width="2"/>
  <line x1="337.5" y1="577" x2="337.5" y2="571.5" stroke="#5a6ab8" stroke-width="1.6" opacity="0.6"/>
  <polygon points="334.8,583.5 340.2,583.5 337.5,576.5" fill="#1a2a90"/>
  <line x1="337.5" y1="599" x2="354" y2="609" stroke="#c84040" stroke-width="2.2"/>
  <polygon points="351,609.5 356,605.5 361,613.5" fill="#c04040" opacity="0.8"/>
  <circle cx="337.5" cy="598.5" r="1.8" fill="#eee"/>
</svg>
<!-- Distanza widget -->
<div class="a" style="left:500px;top:159.5px;width:110.5px;height:18.5px;background:#f3f3f3;border:1px solid #e2e2e2"></div>
<svg class="a" style="left:502px;top:162px" width="4" height="14" viewBox="0 0 4 14"><path d="M1 1 L1 13 M3 1 L3 13" stroke="#c8c8c8" stroke-width="0.8" stroke-dasharray="0.8 1.2"/></svg>
<div class="a" style="left:513px;top:164px;font-size:6.9px;line-height:10px;color:#333">Distanza</div>
<div class="a" style="left:541px;top:162.6px;width:33.4px;height:12.6px;background:#fff;border:1px solid #d4d4d4"></div>
<div class="a" style="left:544px;top:164.6px;width:4.6px;height:8.6px;background:#3d8fd6"></div>
<div class="a" style="left:545px;top:164.4px;font-size:7px;line-height:9px;color:#cfe4f8">0</div>
<div class="a" style="left:575.4px;top:162.6px;width:20.7px;height:12.6px;background:#fff;border:1px solid #d8d8d8"></div>
<div class="a" style="left:577.7px;top:164px;font-size:7.6px;line-height:10px;color:#333">mm</div>
<div class="a" style="left:597px;top:162.6px;width:11.5px;height:12.6px;background:#fbfbfb;border:1px solid #e6e6e6"></div>
<div class="arr" style="left:600.2px;top:167.8px"></div>

<!-- DIALOG -->
<div class="a" style="left:244px;top:116px;width:187.5px;height:248px;background:#c8c8c8;border-right:1.5px solid #d6d6d6;border-bottom:1px solid #d0d0d0;box-shadow:1px 1px 2px rgba(0,0,0,0.2)"></div>
<div class="a" style="left:244px;top:115px;width:187.5px;height:1px;background:#dff4f8"></div>
<div class="a" style="left:244px;top:116px;width:187.5px;height:15px;background:#509db6"></div>
<svg class="a" style="left:248.3px;top:119.4px" width="10" height="10" viewBox="0 0 10 10"><circle cx="5" cy="5" r="3" fill="none" stroke="#e0f6fa" stroke-width="1.8"/><circle cx="5" cy="5" r="4.2" fill="none" stroke="#e0f6fa" stroke-width="0.9" stroke-dasharray="1.2 1.6"/></svg>
<div class="a t" style="left:264px;top:119.6px;color:#d8f2f8;font-size:8px">Crea sketch</div>
<svg class="a" style="left:404px;top:119px" width="12" height="12" viewBox="0 0 12 12"><path d="M5.4 2.4 A3.4 3.4 0 1 1 2.05 5.2" fill="none" stroke="#d8f6fc" stroke-width="1.5"/><circle cx="2.2" cy="5" r="1" fill="#d8f6fc"/></svg>
<svg class="a" style="left:417px;top:119.5px" width="10" height="10" viewBox="0 0 10 10"><path d="M1.6 1.6 L8.4 8.1 M8.4 1.6 L1.6 8.1" stroke="#d8f8fc" stroke-width="1.6"/></svg>
<!-- sections -->
<div class="a" style="left:247.5px;top:132.5px;width:180.5px;height:40.5px;background:#f0f0f0;border-bottom:1px solid #b8b8b8"></div>
<div class="a" style="left:247.5px;top:174.5px;width:180.5px;height:60.5px;background:#f0f0f0;border-bottom:1px solid #b8b8b8"></div>
<div class="a" style="left:247.5px;top:237px;width:180.5px;height:58.5px;background:#f0f0f0;border-bottom:1px solid #b8b8b8"></div>
<div class="a" style="left:247.5px;top:297px;width:180.5px;height:40px;background:#f0f0f0;border-bottom:1px solid #b8b8b8"></div>
<div class="a teal" style="left:252.5px;top:136px;font-size:8.4px;line-height:10px;color:#4a93ad">Tipo sketch</div>
<div class="a teal" style="left:252.5px;top:178px;font-size:8.4px;line-height:10px;color:#4a93ad">Piano sketch</div>
<div class="a teal" style="left:252.5px;top:239.5px;font-size:8.4px;line-height:10px;color:#4a93ad">Orientamento sketch</div>
<div class="a teal" style="left:252.5px;top:301px;font-size:8.4px;line-height:10px;color:#4a93ad">Origine sketch</div>
<svg class="a" style="left:416px;top:137.5px" width="9" height="7" viewBox="0 0 9 7"><path d="M1 5.5 L4.5 1.8 L8 5.5" fill="none" stroke="#2f7f98" stroke-width="1.5"/></svg>
<svg class="a" style="left:416px;top:179.5px" width="9" height="7" viewBox="0 0 9 7"><path d="M1 5.5 L4.5 1.8 L8 5.5" fill="none" stroke="#2f7f98" stroke-width="1.5"/></svg>
<svg class="a" style="left:416px;top:241px" width="9" height="7" viewBox="0 0 9 7"><path d="M1 5.5 L4.5 1.8 L8 5.5" fill="none" stroke="#2f7f98" stroke-width="1.5"/></svg>
<svg class="a" style="left:416px;top:302.5px" width="9" height="7" viewBox="0 0 9 7"><path d="M1 5.5 L4.5 1.8 L8 5.5" fill="none" stroke="#2f7f98" stroke-width="1.5"/></svg>
<!-- Tipo sketch dropdown -->
<div class="dd" style="left:253.5px;top:152.5px;width:169px;height:15px"></div>
<svg class="a" style="left:256px;top:154.5px" width="10" height="10" viewBox="0 0 10 10"><path d="M2 2 L7.5 1.5 L8.5 8.5 L3 8.5 Z" fill="#fff" stroke="#555" stroke-width="0.8"/><path d="M1 3 L4 1.5 L5 5 Z" fill="#e8b030"/></svg>
<div class="a t" style="left:268.5px;top:155px;color:#333">Su piano</div>
<div class="arr" style="left:414px;top:158.5px"></div>
<!-- Piano sketch -->
<div class="a t" style="left:253.5px;top:196.5px;color:#333">Metodo piani</div>
<div class="dd" style="left:335.5px;top:194.8px;width:86.5px;height:13.5px"></div>
<div class="a t" style="left:338.5px;top:196.5px;color:#333">Nuovo piano</div>
<div class="arr" style="left:414px;top:200px"></div>
<div class="a" style="left:253px;top:210px;width:105.2px;height:19.3px;background:#fddc78"></div>
<div class="a" style="left:392.3px;top:210px;width:30px;height:19.3px;background:#fddc78"></div>
<svg class="a" style="left:254px;top:214px" width="10" height="10" viewBox="0 0 10 10"><path d="M1 5 L4 8.5 L9 1.5" fill="none" stroke="#27a327" stroke-width="2"/></svg>
<div class="a t" style="left:266px;top:214.5px;color:#222">Seleziona piano</div>
<div class="a" style="left:360px;top:212px;width:14.5px;height:14.5px;background:#f4f4f4;border:1px solid #bdbdbd"></div>
<svg class="a" style="left:361px;top:213px" width="13" height="13" viewBox="0 0 13 13"><path d="M2.5 3 L10.5 10" stroke="#555" stroke-width="1"/><path d="M3 10.5 L10 2.5" stroke="#3a38b8" stroke-width="1.6"/><circle cx="3.5" cy="10" r="1.2" fill="#3030b0"/><circle cx="9.6" cy="3" r="1.2" fill="#3030b0"/></svg>
<div class="a" style="left:376px;top:212px;width:15px;height:14.5px;background:#f4f4f4;border:1px solid #bdbdbd"></div>
<svg class="a" style="left:377px;top:213px" width="13" height="13" viewBox="0 0 13 13"><rect x="5" y="2" width="6" height="8" fill="#fff" stroke="#555" stroke-width="0.8"/><path d="M2 6 Q3 10 7 10" fill="none" stroke="#e08a30" stroke-width="1.4"/></svg>
<svg class="a" style="left:393px;top:211px" width="18" height="18" viewBox="0 0 18 18"><path d="M2.5 3.5 L12.5 3.5 L14 14.5 L4 16 Z" fill="#fbfbf4" stroke="#8a7a38" stroke-width="1.2"/><path d="M8.5 12 L14.5 4.5" stroke="#6a8a30" stroke-width="1.6"/><path d="M13 3 L16 2.5 L15.5 5.5 Z" fill="#9ab040"/></svg>
<div class="arr" style="left:414px;top:218.5px"></div>
<!-- Orientamento -->
<div class="a t" style="left:253.5px;top:257.5px;color:#333">Riferimento</div>
<div class="dd" style="left:335.5px;top:256.3px;width:86.5px;height:13.5px"></div>
<div class="a t" style="left:338.5px;top:258px;color:#333">Orizzontale</div>
<div class="arr" style="left:414px;top:261.5px"></div>
<svg class="a" style="left:254px;top:276px" width="10" height="10" viewBox="0 0 10 10"><path d="M1 5 L4 8.5 L9 1.5" fill="none" stroke="#3aa33a" stroke-width="2"/></svg>
<div class="a t" style="left:266px;top:276px;color:#333">Specifica vettore</div>
<div class="a" style="left:360px;top:273.6px;width:14.5px;height:14.5px;background:#f4f4f4;border:1px solid #bdbdbd"></div>
<svg class="a" style="left:361px;top:274.6px" width="13" height="13" viewBox="0 0 13 13"><path d="M2.5 3 L10.5 10" stroke="#555" stroke-width="1"/><path d="M3 10.5 L10 2.5" stroke="#3a38b8" stroke-width="1.6"/><circle cx="3.5" cy="10" r="1.2" fill="#3030b0"/><circle cx="9.6" cy="3" r="1.2" fill="#3030b0"/></svg>
<div class="a" style="left:376px;top:273.6px;width:15px;height:14.5px;background:#f4f4f4;border:1px solid #bdbdbd"></div>
<svg class="a" style="left:377px;top:274.6px" width="13" height="13" viewBox="0 0 13 13"><path d="M7.5 4 L7.5 9" stroke="#d04060" stroke-width="1.1"/><polygon points="6,4.5 9,4.5 7.5,2" fill="#a02030"/><path d="M2 6.5 Q2.5 10.5 6.5 10.5" fill="none" stroke="#f0a040" stroke-width="1.6"/><path d="M8.5 11 L11.5 11" stroke="#333" stroke-width="1" stroke-dasharray="0.7 0.5"/></svg>
<div class="a" style="left:392.3px;top:271.5px;width:19.3px;height:18.7px;background:#f2f2f2;border:1px solid #c8c8c8"></div>
<div class="a" style="left:411.6px;top:271.5px;width:10.5px;height:18.7px;background:#f2f2f2;border:1px solid #c8c8c8;border-left:none"></div>
<svg class="a" style="left:394px;top:273px" width="16" height="16" viewBox="0 0 16 16"><path d="M6.5 15 L6 6" stroke="#b8a0a0" stroke-width="1.1"/><path d="M6 9 L6 5" stroke="#a82020" stroke-width="1.8"/><polygon points="4,5.5 8,5.5 6,1.5" fill="#b02020"/><path d="M8 13 L9.5 9 L11 10 L13 5" fill="none" stroke="#c8c050" stroke-width="1.6"/></svg>
<div class="arr" style="left:414.5px;top:279.5px"></div>
<!-- Origine -->
<div class="a t" style="left:253.7px;top:319.5px;color:#333">Metodo di origine</div>
<div class="dd" style="left:335.2px;top:317px;width:87px;height:13.5px"></div>
<div class="a t" style="left:338.5px;top:319px;color:#333;font-size:7.2px">Utilizza origine parte d</div>
<div class="arr" style="left:414.5px;top:322.5px"></div>
<!-- buttons -->
<div class="a" style="left:331px;top:343.6px;width:43.5px;height:13.4px;background:#67b7cf"></div>
<div class="a t" style="left:331px;top:345.5px;width:43.5px;text-align:center;color:#e6f6fb">&lt; OK &gt;</div>
<div class="a" style="left:378.2px;top:343.6px;width:43.4px;height:13.4px;background:#ececec;border:1px solid #bfbfbf"></div>
<div class="a t" style="left:378.2px;top:345.5px;width:43.4px;text-align:center;color:#333">Annulla</div>

</div></body></html>
